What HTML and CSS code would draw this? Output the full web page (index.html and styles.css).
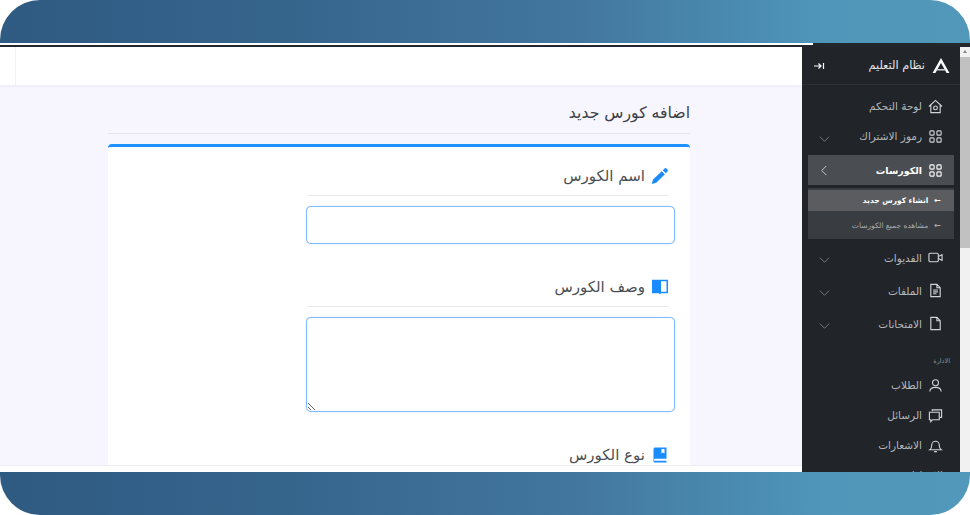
FILE: index.html
```html
<!DOCTYPE html>
<html lang="ar">
<head>
  <meta charset="UTF-8">
  <meta name="viewport" content="width=device-width, initial-scale=1.0">
  <title>نظام التعليم</title>
  <link rel="stylesheet" href="styles.css">
</head>
<body>

<div class="band band-top"></div>
<div class="band-line"><div class="band-line-light"></div></div>

<div class="app">
  <!-- Main column -->
  <div class="main">
    <div class="topbar"><div class="topbar-edge"></div></div>
    <div class="content">
      <h1 class="page-title">اضافه كورس جديد</h1>
      <div class="card">
        <div class="field">
          <div class="field-head">
            <svg class="field-icon" viewBox="0 0 16 16" fill="currentColor"><path d="M12.300.7a1.700 1.700 0 0 1 2.400 0l.6.6a1.700 1.700 0 0 1 0 2.400l-1.500 1.500-3-3zM9.800 3.200l3 3-8.500 8.500-3.700 1a.5.500 0 0 1-.6-.6l1-3.700z"/></svg>
            <span>اسم الكورس</span>
          </div>
          <input class="field-input" type="text">
        </div>
        <div class="field">
          <div class="field-head">
            <svg class="field-icon" viewBox="0 0 16 16" fill="currentColor"><path d="M0 .8h16v13.400H9L8 15.500l-1-1.300H0zM9 2.300v10.400h5.500V2.300z"/></svg>
            <span>وصف الكورس</span>
          </div>
          <textarea class="field-input field-area"></textarea>
        </div>
        <div class="field">
          <div class="field-head">
            <svg class="field-icon" viewBox="0 0 16 16" fill="currentColor"><path d="M1.500 2.200C1.500 1 2.400.5 3.200.5h11.300v11.200H3.200c-.7 0-1.200.4-1.200 1s.5 1.100 1.200 1.100h11.300v1.700H3c-.9 0-1.500-.7-1.500-1.600zM9.500 2v4.500l1.500-1 1.500 1V2z"/></svg>
            <span>نوع الكورس</span>
          </div>
        </div>
      </div>
    </div>
    <div class="footer"></div>
  </div>

  <!-- Sidebar -->
  <div class="sidebar">
    <div class="brand">
      <svg class="brand-logo" viewBox="0 0 20 18" fill="#fff"><path d="M10 0l9.500 17h-3.200L10 5.500 3.700 17H.5z"/><path d="M5 12.500h10l1 1.700H4z" fill="#cfd2d6"/></svg>
      <span class="brand-name">نظام التعليم</span>
      <svg class="brand-toggle" viewBox="0 0 12 10" fill="none" stroke="#fff" stroke-width="1.200"><path d="M1 5h7M5.500 2.500 8 5 5.500 7.500M10.500 2v6"/></svg>
    </div>

    <div class="nav-item nav-first">
      <svg class="nav-icon" viewBox="0 0 16 16"><path d="M1 8 8 1.500 15 8M3 6.500V14.500H13V6.500"/><circle cx="8" cy="9.500" r="2"/></svg>
      <span>لوحة التحكم</span>
    </div>
    <div class="nav-item">
      <svg class="nav-icon" viewBox="0 0 16 16"><rect x="2" y="2" width="4.500" height="4.500" rx="1"/><rect x="9.500" y="2" width="4.500" height="4.500" rx="1"/><rect x="2" y="9.500" width="4.500" height="4.500" rx="1"/><rect x="9.500" y="9.500" width="4.500" height="4.500" rx="1"/></svg>
      <span>رموز الاشتراك</span>
      <svg class="nav-arrow" viewBox="0 0 12 12"><path d="M1 4l5 5 5-5"/></svg>
    </div>
    <div class="nav-item nav-active">
      <svg class="nav-icon" viewBox="0 0 16 16"><rect x="2" y="2" width="4.500" height="4.500" rx="1"/><rect x="9.500" y="2" width="4.500" height="4.500" rx="1"/><rect x="2" y="9.500" width="4.500" height="4.500" rx="1"/><rect x="9.500" y="9.500" width="4.500" height="4.500" rx="1"/></svg>
      <span>الكورسات</span>
      <svg class="nav-arrow" viewBox="0 0 12 12"><path d="M8 1 3 6l5 5"/></svg>
    </div>
    <div class="subnav">
      <div class="sub-item sub-active"><span class="sub-dot">←</span><span>انشاء كورس جديد</span></div>
      <div class="sub-item"><span class="sub-dot">←</span><span>مشاهده جميع الكورسات</span></div>
    </div>
    <div class="nav-item nav-after-sub">
      <svg class="nav-icon" viewBox="0 0 16 16"><rect x="1" y="3.500" width="10" height="9" rx="1.200"/><path d="M11 7l4-2v6l-4-2"/></svg>
      <span>الفديوات</span>
      <svg class="nav-arrow" viewBox="0 0 12 12"><path d="M1 4l5 5 5-5"/></svg>
    </div>
    <div class="nav-item nav-tall">
      <svg class="nav-icon" viewBox="0 0 16 16"><path d="M3 1.500h6.500L13 5v9.500H3zM9.500 1.500V5H13M5.500 7.500h5M5.500 9.500h5M5.500 11.500h3.500"/></svg>
      <span>الملفات</span>
      <svg class="nav-arrow" viewBox="0 0 12 12"><path d="M1 4l5 5 5-5"/></svg>
    </div>
    <div class="nav-item nav-tall">
      <svg class="nav-icon" viewBox="0 0 16 16"><path d="M3 1.500h6.500L13 5v9.500H3zM9.500 1.500V5H13"/></svg>
      <span>الامتحانات</span>
      <svg class="nav-arrow" viewBox="0 0 12 12"><path d="M1 4l5 5 5-5"/></svg>
    </div>

    <div class="nav-label">الادارة</div>

    <div class="nav-item">
      <svg class="nav-icon" viewBox="0 0 16 16"><circle cx="8" cy="5" r="3.200"/><path d="M2 14.500c0-3.200 2.600-4.500 6-4.500s6 1.300 6 4.500"/></svg>
      <span>الطلاب</span>
    </div>
    <div class="nav-item">
      <svg class="nav-icon" viewBox="0 0 16 16"><path d="M4.500 3.500V2h10v8h-2"/><path d="M1.500 4.500h10.500v8H5l-2 2v-2H1.500z"/></svg>
      <span>الرسائل</span>
    </div>
    <div class="nav-item">
      <svg class="nav-icon" viewBox="0 0 16 16"><path d="M2 12.500c1.500-1 2-2 2-5a4 4 0 0 1 8 0c0 3 .5 4 2 5zM6.500 14.500h3"/></svg>
      <span>الاشعارات</span>
    </div>
    <div class="nav-item">
      <span>الاعدادات</span>
    </div>
  </div>

  <div class="scrollbar">
    <div class="scroll-up"></div>
    <div class="scroll-thumb"></div>
  </div>
</div>

<div class="band band-bottom"></div>

</body>
</html>
```

FILE: styles.css
```css
body {
  font-family: "DejaVu Sans", "Liberation Sans", sans-serif;
  margin: 0;
  padding: 0;
  background-color: #ffffff;
  height: 515px;
  overflow: hidden;
  display: flex;
  flex-direction: column;
}

.band {
  flex: none;
  height: 43px;
  background: linear-gradient(90deg, #2f5a82 0%, #36658c 30%, #4377a0 60%, #4f96ba 85%, #5198bb 100%);
}

.band-top {
  border-radius: 40px 40px 0 0;
}

.band-bottom {
  border-radius: 0 0 40px 40px;
}

.band-line {
  flex: none;
  height: 4px;
  background-color: #23272c;
}

.band-line-light {
  width: 813px;
  height: 2px;
  background-color: #ffffff;
}

.app {
  flex: none;
  height: 425px;
  display: flex;
  overflow: hidden;
}

/* Main column */
.main {
  flex: 1;
  display: flex;
  flex-direction: column;
  background-color: #f7f6fe;
  min-width: 0;
}

.topbar {
  flex: none;
  height: 38px;
  background-color: #ffffff;
  box-shadow: 0 1px 3px rgba(90, 90, 160, 0.08);
}

.topbar-edge {
  width: 15px;
  height: 100%;
  border-right: 1px solid #f0f0f6;
}

.content {
  flex: 1;
  min-height: 0;
  overflow: hidden;
  direction: rtl;
  margin-left: 108px;
  width: 582px;
}

.page-title {
  margin: 0 0 10px 0;
  height: 48px;
  line-height: 55px;
  font-size: 15.700px;
  font-weight: normal;
  color: #3d4146;
  border-bottom: 1px solid #e4e4ea;
}

.card {
  background-color: #ffffff;
  border-top: 3px solid #1e90ff;
  border-radius: 4px 4px 0 0;
  height: 321px;
  padding-top: 15px;
  box-sizing: border-box;
  overflow: hidden;
}

.field {
  width: 369px;
  margin-right: 15px;
  margin-bottom: 29px;
}

.field-head {
  height: 34px;
  margin: 0 7px 10px 2px;
  border-bottom: 1px solid #e8e8ec;
  display: flex;
  align-items: center;
  gap: 7px;
  padding-bottom: 6px;
  box-sizing: border-box;
  font-size: 15px;
  color: #4a4e53;
}

.field-icon {
  width: 16px;
  height: 16px;
  color: #1b8cff;
  flex: none;
}

.field-input {
  display: block;
  width: 100%;
  height: 38px;
  box-sizing: border-box;
  border: 1px solid #80bdff;
  border-radius: 5px;
  box-shadow: 0 0 1px #80bdff;
  background-color: #ffffff;
  outline: none;
  padding: 6px 12px;
  margin: 0;
  font-family: inherit;
}

.field-area {
  height: 95px;
}

.footer {
  flex: none;
  height: 7px;
  background-color: #ffffff;
  border-top: 1px solid #eeeef2;
  box-sizing: border-box;
}

/* Sidebar */
.sidebar {
  flex: none;
  width: 158px;
  direction: rtl;
  background-color: #212529;
  color: #b4b7bb;
  overflow: hidden;
  font-size: 10.500px;
}

.brand {
  height: 38px;
  display: flex;
  align-items: center;
  padding: 0 10px 0 10px;
  border-bottom: 1px solid #2d3136;
  box-sizing: border-box;
}

.brand-logo {
  width: 18px;
  height: 16px;
  flex: none;
}

.brand-name {
  margin-right: 7px;
  font-size: 11.300px;
  color: #e6e7e9;
}

.brand-toggle {
  width: 12px;
  height: 10px;
  margin-right: auto;
  margin-left: 1px;
}

.nav-item {
  height: 30px;
  display: flex;
  align-items: center;
  gap: 6px;
  margin: 0 6px;
  padding: 0 11px 0 11px;
}

.nav-first {
  margin-top: 6px;
}

.nav-icon {
  width: 15px;
  height: 15px;
  flex: none;
  fill: none;
  stroke: #d2d4d7;
  stroke-width: 1.200;
}

.nav-arrow {
  width: 11px;
  height: 11px;
  margin-right: auto;
  margin-top: 4px;
  fill: none;
  stroke: #7d8186;
  stroke-width: 1;
}

.nav-active {
  margin-top: 4px;
  background-color: #4a4d51;
  color: #ffffff;
  font-weight: bold;
  font-size: 9.500px;
}

.nav-active .nav-icon {
  stroke: #ffffff;
}

.nav-active .nav-arrow {
  margin-top: 0;
  stroke: #d2d4d7;
}

.subnav {
  margin: 3px 6px 0;
  background-color: #393c41;
  padding-top: 2px;
  height: 51px;
  box-sizing: border-box;
  font-size: 7.500px;
}

.sub-item {
  height: 24px;
  display: flex;
  align-items: center;
  gap: 6px;
  padding: 0 13px;
  color: #a8abaf;
}

.sub-active {
  height: 21px;
  background-color: #5a5c60;
  color: #ffffff;
  font-weight: bold;
  margin-bottom: 2px;
}

.sub-dot {
  font-size: 8px;
  font-weight: bold;
}

.nav-after-sub {
  margin-top: 2px;
  height: 33px;
}

.nav-tall {
  height: 33px;
}

.nav-label {
  height: 13px;
  padding: 17px 10px 0 0;
  font-size: 6.500px;
  color: #8e9196;
}

/* Scrollbar */
.scrollbar {
  flex: none;
  width: 10px;
  background-color: #f1f1f1;
  display: flex;
  flex-direction: column;
  align-items: stretch;
}

.scroll-up {
  height: 10px;
  position: relative;
}

.scroll-up::after {
  content: "";
  position: absolute;
  top: 3px;
  left: 3px;
  border-left: 2px solid transparent;
  border-right: 2px solid transparent;
  border-bottom: 3px solid #8a8a8a;
}

.scroll-thumb {
  height: 191px;
  background-color: #c1c1c1;
}
```
